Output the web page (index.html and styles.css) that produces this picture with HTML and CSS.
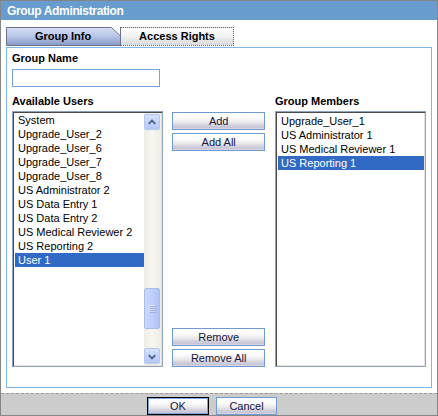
FILE: index.html
```html
<!DOCTYPE html>
<html>
<head>
<meta charset="utf-8">
<link rel="stylesheet" href="styles.css">
</head>
<body>
<div class="dialog">
  <div class="titlebar">Group Administration</div>
  <div class="body">
    <div class="tabs">
      <div class="tab tab-active">
        <svg class="tab-shape" width="115" height="19" viewBox="0 0 115 19">
          <defs>
            <linearGradient id="tg" x1="0" y1="0" x2="0" y2="1">
              <stop offset="0" stop-color="#d6def3"/>
              <stop offset="0.45" stop-color="#bac8ea"/>
              <stop offset="1" stop-color="#8797c4"/>
            </linearGradient>
          </defs>
          <polygon points="0.5,18.5 0.5,0.5 105.5,0.5 114.5,9 114.5,18.5" fill="url(#tg)" stroke="#6d7386" stroke-width="1"/>
        </svg>
        <span class="tab-label">Group Info</span>
      </div>
      <div class="tab tab-inactive"><span class="tab-label">Access Rights</span></div>
    </div>
    <div class="panel">
      <div class="label label-name">Group Name</div>
      <div class="name-input"></div>
      <div class="label label-avail">Available Users</div>
      <div class="lists">
        <div class="listbox listbox-left">
          <div class="items">
            <div class="item">System</div>
            <div class="item">Upgrade_User_2</div>
            <div class="item">Upgrade_User_6</div>
            <div class="item">Upgrade_User_7</div>
            <div class="item">Upgrade_User_8</div>
            <div class="item">US Administrator 2</div>
            <div class="item">US Data Entry 1</div>
            <div class="item">US Data Entry 2</div>
            <div class="item">US Medical Reviewer 2</div>
            <div class="item">US Reporting 2</div>
            <div class="item selected">User 1</div>
          </div>
          <div class="scrollbar">
            <div class="sb-btn">
              <svg width="15" height="15" viewBox="0 0 15 15"><polyline points="4,9 7.5,5.5 11,9" fill="none" stroke="#4d6185" stroke-width="2"/></svg>
            </div>
            <div class="sb-track">
              <div class="sb-thumb">
                <svg width="15" height="40" viewBox="0 0 15 40"><g stroke="#f2f5fe" stroke-width="1"><line x1="4" y1="16.5" x2="11" y2="16.5"/><line x1="4" y1="18.5" x2="11" y2="18.5"/><line x1="4" y1="20.5" x2="11" y2="20.5"/><line x1="4" y1="22.5" x2="11" y2="22.5"/></g><g stroke="#8ca5e0" stroke-width="1"><line x1="5" y1="17.5" x2="12" y2="17.5"/><line x1="5" y1="19.5" x2="12" y2="19.5"/><line x1="5" y1="21.5" x2="12" y2="21.5"/><line x1="5" y1="23.5" x2="12" y2="23.5"/></g></svg>
              </div>
            </div>
            <div class="sb-btn">
              <svg width="15" height="15" viewBox="0 0 15 15"><polyline points="4,6 7.5,9.5 11,6" fill="none" stroke="#4d6185" stroke-width="2"/></svg>
            </div>
          </div>
        </div>
        <div class="buttons">
          <div class="btn-group">
            <div class="btn">Add</div>
            <div class="btn">Add All</div>
          </div>
          <div class="btn-group">
            <div class="btn">Remove</div>
            <div class="btn">Remove All</div>
          </div>
        </div>
        <div class="right-col">
          <div class="label label-members">Group Members</div>
          <div class="listbox listbox-right">
            <div class="items">
              <div class="item">Upgrade_User_1</div>
              <div class="item">US Administrator 1</div>
              <div class="item">US Medical Reviewer 1</div>
              <div class="item selected">US Reporting 1</div>
            </div>
          </div>
        </div>
      </div>
    </div>
  </div>
  <div class="footer">
    <div class="btn btn-ok"><span>OK</span></div>
    <div class="btn btn-cancel">Cancel</div>
  </div>
</div>
</body>
</html>
```

FILE: styles.css
```css
* { box-sizing: border-box; }
html, body { margin: 0; padding: 0; background: #ffffff; }
body {
  font-family: "Liberation Sans", Arial, sans-serif;
  font-size: 11px;
  color: #000;
}
.dialog {
  width: 438px;
  height: 416px;
  border: 1px solid #858585;
  background: #ffffff;
  display: flex;
  flex-direction: column;
}
.titlebar {
  height: 19px;
  padding: 2px 0 0 6px;
  line-height: 17px;
  background: #689cce;
  color: #ffffff;
  font-weight: bold;
  font-size: 12px;
  letter-spacing: -0.35px;
}
.body {
  padding: 7px 5px 0 5px;
  height: 372px;
}
.tabs {
  display: flex;
  height: 19px;
}
.tab {
  position: relative;
  width: 114px;
  height: 19px;
  display: flex;
  align-items: center;
  justify-content: center;
  font-weight: bold;
  line-height: 19px;
}
.tab-active { width: 114px; }
.tab-shape {
  position: absolute;
  left: 0;
  top: 0;
}
.tab-label { position: relative; }
.tab-inactive {
  border: 1px dotted #5f6470;
  border-left: 1px solid #6d7386;
  background: linear-gradient(to bottom, #ffffff 0%, #f3f3f3 45%, #d9d9dc 100%);
}
.panel {
  margin-top: 1px;
  height: 341px;
  border: 1px solid #7db6ea;
  padding: 3px 5px 0 5px;
}
.label {
  font-weight: bold;
  line-height: 14px;
  height: 14px;
}
.name-input {
  margin-top: 4px;
  width: 148px;
  height: 18px;
  border: 1px solid #77a5da;
  background: #fff;
}
.label-avail { margin-top: 7px; }
.lists {
  display: flex;
  margin-top: 3px;
  height: 256px;
}
.listbox {
  height: 256px;
  border: 1px solid #8fa2bf;
  padding: 1px;
  box-shadow: inset 1px 1px 0 #4a4a4a, inset -1px -1px 0 #e4e2da;
  display: flex;
  background: #fff;
}
.listbox-left { width: 152px; }
.items {
  flex: 1;
  padding-left: 1px;
  padding-top: 0;
}
.item {
  height: 14px;
  line-height: 14px;
  padding-left: 3px;
  white-space: nowrap;
}
.item.selected {
  background: #316ac5;
  color: #ffffff;
}
.scrollbar {
  width: 17px;
  display: flex;
  flex-direction: column;
  background: linear-gradient(to right, #eeede5 0%, #f6f5ef 50%, #eeede5 100%);
  padding: 1px 1px 1px 0;
}
.sb-btn {
  width: 16px;
  height: 16px;
  border: 1px solid #b5c8ef;
  border-radius: 2px;
  background: linear-gradient(to bottom, #d4e0fd 0%, #c2d3fb 50%, #b3c7f5 100%);
  display: flex;
  align-items: center;
  justify-content: center;
}
.sb-track { flex: 1; }
.sb-thumb {
  margin-top: 158px;
  width: 16px;
  height: 41px;
  border: 1px solid #a9bde9;
  border-radius: 2px;
  background: linear-gradient(to right, #c9d7fc 0%, #bccdfa 60%, #aec2f3 100%);
  display: flex;
  align-items: center;
  justify-content: center;
  overflow: hidden;
}
.buttons {
  margin-left: 9px;
  width: 93px;
  display: flex;
  flex-direction: column;
  justify-content: space-between;
  padding-top: 1px;
  padding-bottom: 0;
}
.btn-group {
  display: flex;
  flex-direction: column;
  gap: 3px;
}
.btn {
  height: 18px;
  border: 1px solid #6e9bd3;
  background: linear-gradient(to bottom, #ffffff 0%, #fbfbfb 30%, #ececee 55%, #d2d0dc 78%, #c6c4d6 90%, #dcdbe4 100%);
  text-align: center;
  line-height: 16px;
  color: #14143c;
}
.right-col {
  margin-left: 10px;
  width: 151px;
  margin-top: -17px;
}
.label-members { margin-bottom: 3px; }
.listbox-right {
  width: 151px;
  padding-top: 2px;
}
.footer {
  margin-top: 4px;
  flex: 1;
  background: #cccccc;
  border-top: 1px dashed #9a9a9a;
  display: flex;
  padding: 3px 0 0 146px;
  gap: 7px;
}
.footer .btn {
  height: 18px;
}
.btn-ok {
  width: 62px;
  border: 1px solid #000;
  padding: 0;
}
.btn-ok span {
  display: block;
  height: 16px;
  border: 1px solid #7aa6da;
  line-height: 14px;
}
.btn-ok {
  background: linear-gradient(to bottom, #ffffff 0%, #fbfbfb 30%, #ececee 55%, #d2d0dc 78%, #c6c4d6 90%, #dcdbe4 100%);
}
.btn-cancel { width: 61px; }
```
